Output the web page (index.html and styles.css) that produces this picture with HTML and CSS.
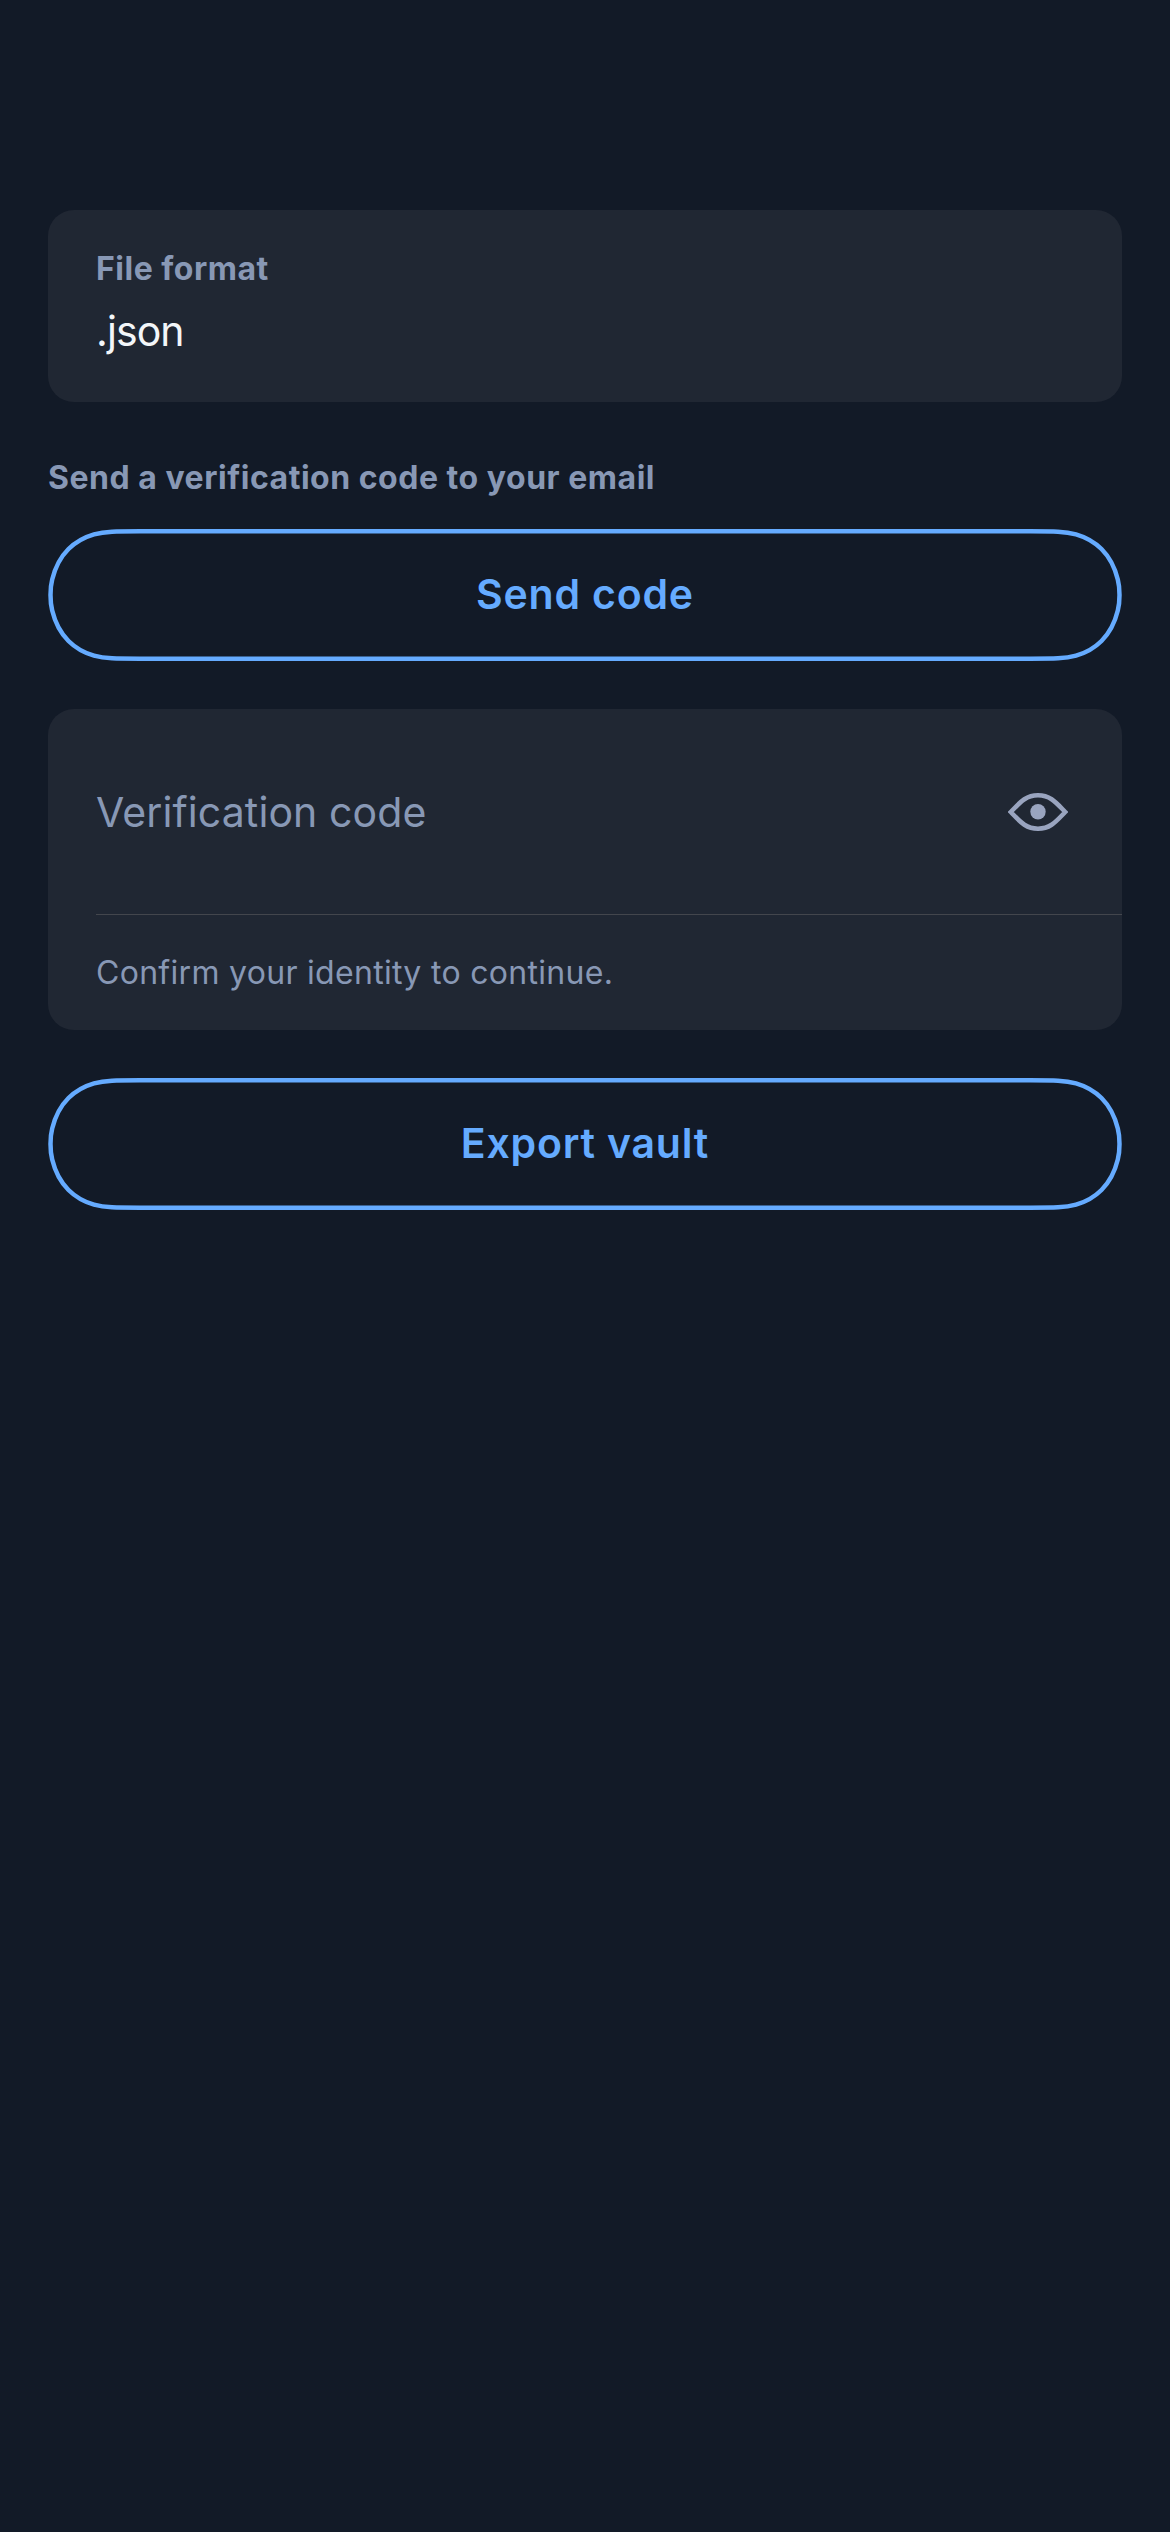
FILE: index.html
```html
<!DOCTYPE html>
<html lang="en">
<head>
<meta charset="utf-8">
<title>Export vault</title>
<link rel="stylesheet" href="styles.css">
</head>
<body>
<main class="screen">
  <section class="card format">
    <span class="label format-label">File format</span>
    <span class="value">.json</span>
  </section>
  <p class="label send-label">Send a verification code to your email</p>
  <button class="button send" type="button">
    <svg class="outline" viewBox="0 0 1074 132" aria-hidden="true"><path id="capsule" d="M92 2.25H982C1006 2.25 1017 2.25 1028 5.3C1038 8.2 1046.500 13 1053.500 20C1061.500 28 1067 39 1069.800 50.500C1071 55 1071.500 60 1071.500 66C1071.500 72 1071 77 1069.800 81.500C1067 93 1061.500 104 1053.500 112C1046.500 119 1038 123.800 1028 126.700C1017 129.750 1006 129.750 982 129.750H92C68 129.750 57 129.750 46 126.700C36 123.800 27.500 119 20.500 112C12.500 104 7 93 4.200 81.500C3 77 2.500 72 2.500 66C2.500 60 3 55 4.200 50.500C7 39 12.500 28 20.500 20C27.500 13 36 8.200 46 5.300C57 2.250 68 2.250 92 2.250Z"/></svg>
    <span>Send code</span>
  </button>
  <section class="card verify">
    <div class="field">
      <span class="placeholder">Verification code</span>
      <svg class="eye" viewBox="0 0 60 38" aria-hidden="true"><path d="M2.800 19C12 9.500 17.500 2.300 30 2.300S48 9.500 57.200 19C48 28.500 42.500 35.700 30 35.700S12 28.500 2.800 19Z"/><circle cx="30" cy="18.800" r="7.700"/></svg>
    </div>
    <p class="helper">Confirm your identity to continue.</p>
  </section>
  <button class="button export" type="button">
    <svg class="outline" viewBox="0 0 1074 132" aria-hidden="true"><use href="#capsule"/></svg>
    <span>Export vault</span>
  </button>
</main>
</body>
</html>
```
FILE: styles.css
```css
* { box-sizing: border-box; }
body {
  margin: 0;
  background: #121a27;
  color: #8898b5;
  font-family: Inter, "Liberation Sans", sans-serif;
}
p { margin: 0; }
.screen {
  display: flex;
  flex-direction: column;
  min-height: 2532px;
  padding: 210px 48px 0;
}
.card {
  background: #202733;
  border-radius: 26px;
}
.format {
  display: flex;
  flex-direction: column;
  gap: 8px;
  height: 192px;
  padding: 34px 48px 0;
}
.label {
  font-size: 32px;
  font-weight: 700;
  line-height: 50px;
}
.format-label { letter-spacing: 0.5px; }
.value {
  color: #f3f6f9;
  font-size: 41px;
  line-height: 58px;
  letter-spacing: -0.9px;
}
.send-label {
  margin: 51px 0 26px;
  letter-spacing: 0.52px;
}
.button {
  position: relative;
  display: flex;
  align-items: center;
  justify-content: center;
  height: 132px;
  padding: 0 0 2px;
  border: 0;
  background: none;
  color: #65abff;
  font: 600 41px/60px Inter, "Liberation Sans", sans-serif;
  letter-spacing: 0.8px;
}
.outline {
  position: absolute;
  inset: 0;
  width: 100%;
  height: 100%;
  fill: none;
  stroke: #65abff;
  stroke-width: 4.5;
}
.verify {
  height: 321px;
  margin: 48px 0;
  padding-left: 48px;
}
.field {
  display: flex;
  align-items: center;
  justify-content: space-between;
  height: 206px;
  padding: 0 54px 0 0;
  border-bottom: 1px solid #43464d;
}
.placeholder {
  font-size: 41px;
  line-height: 60px;
  letter-spacing: 0.1px;
}
.eye {
  width: 60px;
  height: 38px;
  fill: none;
  stroke: #99a4bf;
  stroke-width: 4.6;
}
.eye circle { fill: #99a4bf; stroke: none; }
.helper {
  font-size: 32px;
  line-height: 115px;
  letter-spacing: 0.3px;
}
```
